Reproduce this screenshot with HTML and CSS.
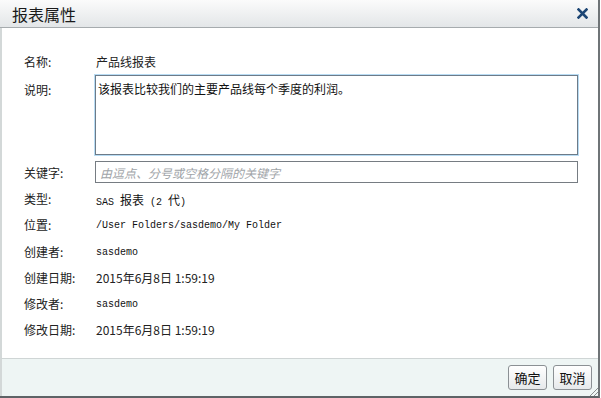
FILE: index.html
```html
<!doctype html>
<html>
<head>
<meta charset="utf-8">
<title>报表属性</title>
<link rel="stylesheet" href="styles.css">
</head>
<body>
<div class="dialog">
	<div class="title-bar">
		<span class="title">报表属性</span>
		<a href="javascript:;" class="close">
			<svg width="11" height="11" viewBox="0 0 11 11"><path d="M1.5 1.5 L9.5 9.5 M9.5 1.5 L1.5 9.5" stroke="#1d4674" stroke-width="2.6" stroke-linecap="square"/></svg>
		</a>
	</div>
	<div class="body">
		<div class="row name-row">
			<span class="label">名称:</span>
			<span class="value">产品线报表</span>
		</div>
		<div class="row desc-row">
			<span class="label">说明:</span>
			<textarea class="desc">该报表比较我们的主要产品线每个季度的利润。</textarea>
		</div>
		<div class="row key-row">
			<span class="label">关键字:</span>
			<input type="text" class="keys" placeholder="由逗点、分号或空格分隔的关键字">
		</div>
		<div class="row info-row">
			<span class="label">类型:</span>
			<span class="value mono">SAS <span class="cjk">报表</span> (2 <span class="cjk">代</span>)</span>
		</div>
		<div class="row info-row">
			<span class="label">位置:</span>
			<span class="value mono">/User Folders/sasdemo/My Folder</span>
		</div>
		<div class="row info-row">
			<span class="label">创建者:</span>
			<span class="value mono">sasdemo</span>
		</div>
		<div class="row info-row">
			<span class="label">创建日期:</span>
			<span class="value">2015年6月8日 1:59:19</span>
		</div>
		<div class="row info-row">
			<span class="label">修改者:</span>
			<span class="value mono">sasdemo</span>
		</div>
		<div class="row info-row">
			<span class="label">修改日期:</span>
			<span class="value">2015年6月8日 1:59:19</span>
		</div>
	</div>
	<div class="footer">
		<a href="javascript:;" class="btn">确定</a>
		<a href="javascript:;" class="btn">取消</a>
		<span class="grip"></span>
	</div>
</div>
</body>
</html>
```
FILE: styles.css
```css
*{margin:0; padding:0; box-sizing:border-box; text-decoration:none;}
body{width:601px; height:398px; background:#fff; font-family:"Liberation Sans","Noto Sans CJK SC",sans-serif; font-size:12px; color:#222;}
.dialog{width:600px; height:398px; display:flex; flex-direction:column; border-right:2px solid #6f7477; border-bottom:2px solid #5e6366;}
.title-bar{height:28px; display:flex; align-items:center; justify-content:space-between; padding:0 10px 0 12px; background:linear-gradient(#fbfbfb,#e3e6e8); border-bottom:1px solid #a6abae;}
.title{font-size:16px; color:#1a1a1a; font-family:"Noto Sans CJK SC",sans-serif; line-height:16px;}
.close{display:flex; width:11px; height:11px;}
.body{flex:1; display:flex; flex-direction:column; padding:20px 20px 0 22px; border-left:2px solid #d3d8d8;}
.row{display:flex; align-items:center;}
.label{width:72px; flex:none; font-family:"Noto Sans CJK SC",sans-serif;}
.value{font-family:"Noto Sans CJK SC",sans-serif;}
.mono{font-family:"Liberation Mono",monospace; font-size:10px; padding-top:2px; color:#111;}
.mono .cjk{font-family:"Noto Sans CJK SC",sans-serif; font-size:12px;}
.name-row{height:26px;}
.desc-row{align-items:flex-start; margin-top:1px;}
.desc-row .label{padding-top:6px;}
.desc{width:484px; height:80px; margin-left:-1px; border:1px solid #6d7b88; box-shadow:0 0 0 1px #b8dcf4; padding:4px 2px; font:12px "Noto Sans CJK SC",sans-serif; color:#111; resize:none; outline:none;}
.key-row{margin-top:6px;}
.keys{width:484px; height:22px; margin-left:-1px; border:1px solid #767c82; padding:0 4px; font:italic 12px "Noto Sans CJK SC",sans-serif; outline:none;}
.keys::placeholder{color:#a0a4a8;}
.key-row + .info-row{margin-top:2px;}
.info-row{height:26px;}
.info-row:nth-child(5){height:27px;}
.footer{height:38px; display:flex; justify-content:flex-end; align-items:center; gap:6px; padding:0 6px 0 0; background:#eef5f4; border-top:1px solid #cfd5d5; border-left:2px solid #d3d8d8; position:relative;}
.btn{display:flex; align-items:center; justify-content:center; width:39px; height:25px; border:1px solid #8b9094; border-radius:3px; background:linear-gradient(#ffffff,#e6e9eb); color:#111; font-family:"Noto Sans CJK SC",sans-serif; font-size:13px;}
.grip{position:absolute; right:0; bottom:0; width:8px; height:8px; background:linear-gradient(135deg,transparent 45%,#8a8e90 45%,#8a8e90 55%,transparent 55%,transparent 70%,#8a8e90 70%,#8a8e90 80%,transparent 80%);}
```
